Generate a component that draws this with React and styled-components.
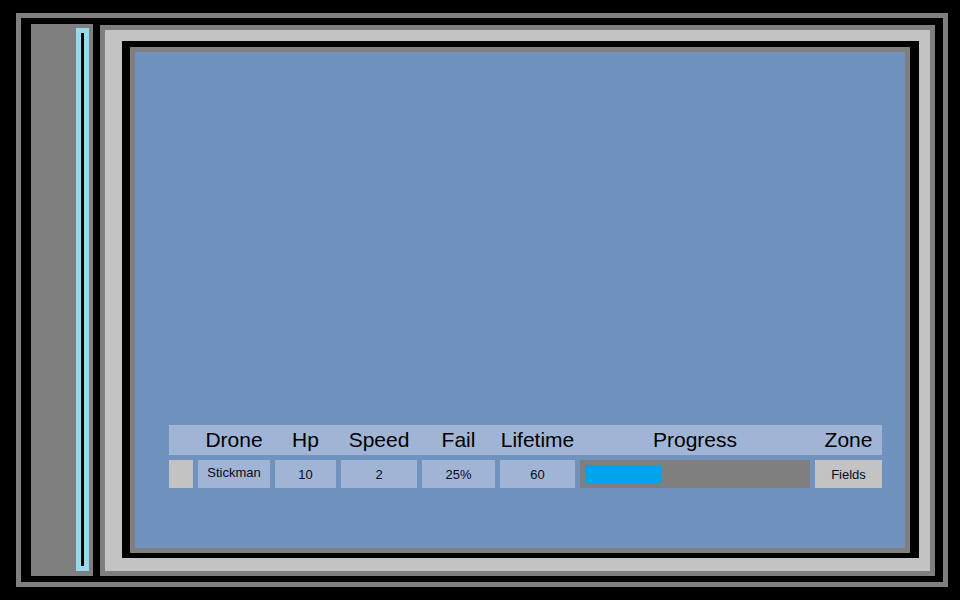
import React from "react";
import styled, { createGlobalStyle } from "styled-components";

const drones = [
  { id: 1, name: "Stickman", hp: 10, speed: 2, fail: "25%", lifetime: 60, progress: 76, zone: "Fields" },
];

const columns = "24px 72px 61px 76px 73px 75px 230px 67px";

export default function App() {
  return (
    <>
      <GlobalStyle />
      <StyledPage>
        <StyledFrame>
          <StyledSidebar>
            <StyledSlider />
          </StyledSidebar>
          <StyledMain>
            <StyledScreen>
              <StyledField>
                <StyledHeaderRow>
                  <span />
                  <span>Drone</span>
                  <span>Hp</span>
                  <span>Speed</span>
                  <span>Fail</span>
                  <span>Lifetime</span>
                  <span>Progress</span>
                  <span>Zone</span>
                </StyledHeaderRow>
                {drones.map((drone) => (
                  <StyledRow key={drone.id}>
                    <StyledCell $tone="gray" />
                    <StyledCell $up>{drone.name}</StyledCell>
                    <StyledCell>{drone.hp}</StyledCell>
                    <StyledCell>{drone.speed}</StyledCell>
                    <StyledCell>{drone.fail}</StyledCell>
                    <StyledCell>{drone.lifetime}</StyledCell>
                    <StyledProgress>
                      <StyledBar style={{ width: drone.progress }} />
                    </StyledProgress>
                    <StyledCell $tone="gray">{drone.zone}</StyledCell>
                  </StyledRow>
                ))}
              </StyledField>
            </StyledScreen>
          </StyledMain>
        </StyledFrame>
      </StyledPage>
    </>
  );
}

const GlobalStyle = createGlobalStyle`
  body {
    margin: 0;
    background: #000;
    font-family: "Liberation Sans", Arial, sans-serif;
  }
`;

const StyledPage = styled.div`
  width: 960px;
  height: 600px;
  box-sizing: border-box;
  padding: 13px 12px 13px 16px;
  background: #000;
`;

const StyledFrame = styled.div`
  height: 100%;
  box-sizing: border-box;
  border: 5px solid #7f7f7f;
  padding: 6px 8px 6px 10px;
  display: flex;
  gap: 7px;
`;

const StyledSidebar = styled.div`
  width: 62px;
  box-sizing: border-box;
  background: #7f7f7f;
  padding: 4px 4px 5px;
  display: flex;
  justify-content: flex-end;
`;

const StyledSlider = styled.div`
  width: 13px;
  box-sizing: border-box;
  border: 5px solid #99d9ea;
  background: #000;
`;

const StyledMain = styled.div`
  flex: 1;
  margin-top: 1px;
  box-sizing: border-box;
  border: 5px solid #7f7f7f;
  background: #c3c3c3;
  padding: 11px 11px 13px 17px;
  display: flex;
`;

const StyledScreen = styled.div`
  flex: 1;
  background: #000;
  padding: 6px 9px 5px 8px;
  display: flex;
`;

const StyledField = styled.div`
  flex: 1;
  border: 5px solid #7f7f7f;
  background: #7092be;
  padding: 0 23px 60px 34px;
  display: flex;
  flex-direction: column;
  justify-content: flex-end;
`;

const StyledHeaderRow = styled.div`
  display: grid;
  grid-template-columns: ${columns};
  column-gap: 5px;
  height: 30px;
  align-items: center;
  background: #a0b5d6;
  font-size: 21px;
  color: #000;
  text-align: center;
  white-space: nowrap;
`;

const StyledRow = styled.div`
  display: grid;
  grid-template-columns: ${columns};
  column-gap: 5px;
  height: 28px;
  margin-top: 5px;
`;

const StyledCell = styled.div`
  display: flex;
  align-items: center;
  justify-content: center;
  padding-bottom: ${({ $up }) => ($up ? "3px" : "0")};
  padding-top: ${({ $up }) => ($up ? "0" : "1px")};
  box-sizing: border-box;
  background: ${({ $tone }) => ($tone === "gray" ? "#c3c3c3" : "#a0b5d6")};
  font-size: 13px;
  color: #0a0a20;
`;

const StyledProgress = styled.div`
  background: #7f7f7f;
  padding: 5px;
  box-sizing: border-box;
  display: flex;
`;

const StyledBar = styled.div`
  height: 18px;
  background: #00a2e8;
`;
